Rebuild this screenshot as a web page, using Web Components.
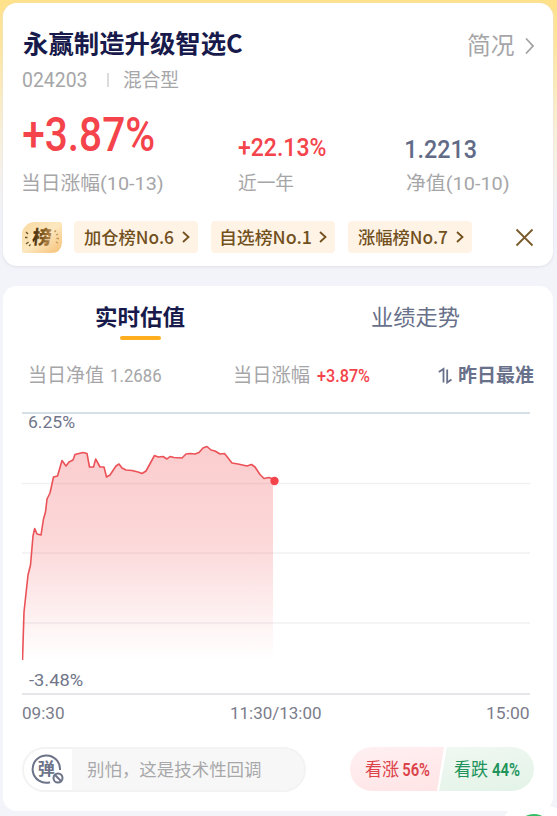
<!DOCTYPE html>
<html lang="zh-CN">
<head>
<meta charset="utf-8">
<title>永赢制造升级智选C</title>
<style>
html,body{
	margin: 0;
	height: 816px;
	overflow: hidden;
}
body{
	font-family: Roboto,"Noto Sans CJK SC",sans-serif;
	color: #a6a6a8;
}
</style>
</head>
<body>
<fund-page></fund-page>
<script>
const define=(name,html,setup)=>{
	const tpl=document.createElement('template');
	tpl.innerHTML=html;
	customElements.define(name,class extends HTMLElement{
		connectedCallback(){
			if(this.shadowRoot)return;
			this.attachShadow({mode:'open'}).appendChild(tpl.content.cloneNode(true));
			if(setup)setup(this,this.shadowRoot);
		}
	});
};

// text condensed or widened so that its ink fills the width given in w
const ctx=document.createElement('canvas').getContext('2d');
define('fit-text',`
<style>
:host{
	display: block;
	flex: none;
	white-space: nowrap;
}
span{
	display: inline-block;
	transform-origin: 0 50%;
}
</style>
<span><slot></slot></span>
`,(el,root)=>{
	const w=+el.getAttribute('w');
	const cs=getComputedStyle(el);
	ctx.font=`${cs.fontWeight} ${cs.fontSize} ${cs.fontFamily}`;
	const m=ctx.measureText(el.textContent);
	const s=w/(m.actualBoundingBoxRight+m.actualBoundingBoxLeft);
	el.style.width=w+'px';
	root.querySelector('span').style.transform=`translateX(${m.actualBoundingBoxLeft*s}px) scaleX(${s})`;
});

define('ui-card',`
<style>
:host{
	display: block;
	box-sizing: border-box;
	background: #fff;
	border-radius: 14px;
}
</style>
<slot></slot>
`);

define('fund-head',`
<style>
:host{
	display: grid;
	grid-template-columns: 1fr auto;
	padding: 0 19px 0 20px;
}
.name{
	font: bold 25.5px/32px "Noto Sans CJK SC",sans-serif;
	color: #171a4b;
	margin-top: -2px;
}
.more{
	display: flex;
	align-items: center;
	gap: 11px;
	font-size: 23.5px;
	line-height: 36px;
	height: 36px;
}
.sub{
	display: flex;
	align-items: center;
	height: 26px;
	font-size: 19px;
	line-height: 26px;
	margin-top: 3px;
}
.sub i{
	width: 2px;
	height: 14px;
	background: #dcdcde;
	margin: 0 14px 0 20px;
}
.code{
	font-size: 20.5px;
}
.type{
	padding-top: 1px;
}
svg{
	display: block;
}
</style>
<fit-text class="name" w="220">永赢制造升级智选C</fit-text>
<div class="more"><fit-text w="46">简况</fit-text>
<svg width="9" height="18" viewBox="0 0 9 18" fill="none" stroke="#a2a2a4" stroke-width="1.8"><path d="M1 1.5 8 9 1 16.5"/></svg></div>
<div class="sub"><fit-text class="code" w="64">024203</fit-text><i></i><fit-text class="type" w="56">混合型</fit-text></div>
`);

define('fund-metrics',`
<style>
:host{
	display: grid;
	grid-template-columns: 215px 168px 1fr;
	padding-left: 20px;
	font-size: 19px;
	line-height: 26px;
}
.v{
	height: 60px;
	line-height: 60px;
	margin-bottom: 6px;
	color: #f4434a;
	font-size: 26.5px;
	font-weight: 500;
	padding-top: 12px;
	box-sizing: border-box;
}
.big{
	font-size: 48px;
	padding-top: 0;
}
.nav{
	color: #616a86;
	padding-top: 14px;
}
</style>
<div><fit-text class="v big" w="131">+3.87%</fit-text><fit-text w="140">当日涨幅(10-13)</fit-text></div>
<div><fit-text class="v" w="88">+22.13%</fit-text><fit-text w="56">近一年</fit-text></div>
<div><fit-text class="v nav" w="70">1.2213</fit-text><fit-text w="103">净值(10-10)</fit-text></div>
`);

define('rank-chip',`
<style>
:host{
	display: flex;
	align-items: center;
	justify-content: space-between;
	box-sizing: border-box;
	width: 124px;
	height: 32px;
	padding: 0 8px 0 10px;
	border-radius: 4px;
	background: #fff3e5;
	color: #72501d;
	font: 500 17.5px/32px "Noto Sans CJK SC",sans-serif;
}
</style>
<slot></slot>
<svg width="8" height="12" viewBox="0 0 8 12" fill="none" stroke="#72501d" stroke-width="1.8"><path d="M1 1 6.5 6 1 11"/></svg>
`);

define('rank-badge',`
<style>
:host{
	display: block;
	width: 40px;
	height: 31px;
}
svg{
	display: block;
}
text{
	font: 900 19px "Noto Sans CJK SC",sans-serif;
}
</style>
<svg width="40" height="31" viewBox="0 0 40 31">
<defs>
<linearGradient id="bg" x1="0" y1="0" x2="1" y2="1"><stop stop-color="#f9d99f"/><stop offset=".5" stop-color="#fce8c0"/><stop offset="1" stop-color="#f5bf73"/></linearGradient>
<linearGradient id="fg"><stop stop-color="#3d2b10"/><stop offset=".35" stop-color="#6b4a1a"/><stop offset="1" stop-color="#b88747"/></linearGradient>
</defs>
<path d="M12 0H38Q40 0 40 2V21Q39 31 29 31H2Q0 31 0 29V11Q2 1 12 0Z" fill="url(#bg)"/>
<text x="12" y="22.500" fill="url(#fg)" transform="skewX(-6)">榜</text>
<g stroke-width="1.3"><path d="M4 10 6 12M3 15.5H5.500M4 22 6.500 20M7 24 8.500 22.500" stroke="#6d5226"/><path d="M34 8.500 32.500 10M36 12 34 13M37 16.500H34.500M36 21 34 20" stroke="#c39659"/></g>
</svg>
`);

define('rank-row',`
<style>
:host{
	display: flex;
	align-items: center;
	padding: 0 19px;
	height: 32px;
	gap: 13px;
}
.x{
	margin-left: auto;
}
rank-badge{
	margin-right: -1px;
}
</style>
<rank-badge></rank-badge>
<rank-chip><fit-text w="90">加仓榜No.6</fit-text></rank-chip>
<rank-chip><fit-text w="90">自选榜No.1</fit-text></rank-chip>
<rank-chip><fit-text w="90">涨幅榜No.7</fit-text></rank-chip>
<svg class="x" width="19" height="19" viewBox="0 0 19 19" fill="none" stroke="#795a2b" stroke-width="1.8"><path d="M1.500 1.500 17.500 17.500M17.500 1.500 1.500 17.500"/></svg>
`);

define('tab-bar',`
<style>
:host{
	display: flex;
	justify-content: space-between;
	padding: 0 93px;
	font-size: 22px;
	line-height: 30px;
	color: #68708a;
}
.on{
	color: #171a4b;
	font-weight: bold;
}
i{
	display: block;
	width: 41px;
	height: 4px;
	margin: 3px auto 0 24px;
	border-radius: 2px;
	background: #ffae1f;
}
</style>
<div><fit-text class="on" w="89">实时估值</fit-text><i></i></div>
<fit-text w="88">业绩走势</fit-text>
`);

define('value-row',`
<style>
:host{
	display: flex;
	padding: 0 19px 0 27px;
	font-size: 19px;
	line-height: 28px;
	height: 28px;
}
.num{
	margin-left: 7px;
}
.up{
	color: #f4434a;
	font-weight: 500;
}
.gap{
	margin-left: 74px;
}
svg{
	margin: 5px 6px 0 auto;
}
.sort{
	color: #68708a;
	font-weight: bold;
}
</style>
<fit-text w="74">当日净值</fit-text><fit-text class="num" w="50">1.2686</fit-text>
<fit-text class="gap" w="75">当日涨幅</fit-text><fit-text class="num up" w="53">+3.87%</fit-text>
<svg width="15" height="18" viewBox="0 0 15 18" fill="none" stroke="#68708a" stroke-width="1.800"><path d="M.8 5 5.500 2V15.500M9.200 2.500V15.500L13.500 12.500"/></svg>
<fit-text class="sort" w="75">昨日最准</fit-text>
`);

const points=[
	[22.5,660],[24,612],[28,575],[30.500,565],[33,536],[34.700,528.500],[37,534],[41,535],[43.500,519],[45.500,512],[47,499],[50,493],[53.500,477],
	[57.500,476],[62,460.500],[66,466],[69,462],[73,460],[75,454.500],[83,452.500],[87,453.500],[89.500,467],[93.500,467],[95.700,459],[100,467],[104,467],[106.500,477],[110,475],
	[116,466],[119,464],[122,468],[126,470],[132,470.500],[138,472],[142,473.500],[146,471],[154.500,455.500],[158,457],[163,456.500],[167,459],[170,456.500],[174,457.500],[182,458],
	[186,454],[190,453.500],[195,454],[199,452.500],[203,448],[207,446.500],[211,450],[215,451],[220,454],[224.500,453.500],[232,463],[238,464],[247,466],[251.500,464.500],[255,467],[260,474.500],[264,478.500],[269,477.500],[273,479]
];
define('trend-chart',`
<style>
:host{
	display: grid;
	margin: 0 23px 0 19px;
	height: 284px;
	color: #707589;
	font-size: 16.500px;
	line-height: 22px;
}
svg{
	display: block;
}
svg,.label{
	grid-area: 1/1;
}
.label{
	margin: 0 0 1px 6.500px;
}
.low{
	align-self: end;
	margin-bottom: 4px;
}
</style>
<svg width="508" height="284" viewBox="22 412 508 284">
<defs><linearGradient id="g" gradientUnits="userSpaceOnUse" x1="0" y1="446" x2="0" y2="660"><stop stop-color="#f04449" stop-opacity=".27"/><stop offset=".45" stop-color="#f04449" stop-opacity=".21"/><stop offset="1" stop-color="#f04449" stop-opacity="0"/></linearGradient></defs>
<path d="M22 413H530" stroke="#d5e0e4" stroke-width="2"/>
<path d="M22 483.500H530M22 553H530M22 623H530" stroke="#f1f1f2" stroke-width="1.500"/>
<path d="M22 694H530" stroke="#e5e6e9" stroke-width="2"/>
<path class="area" fill="url(#g)"/>
<path class="line" fill="none" stroke="#eb5257" stroke-width="1.600" stroke-linejoin="round"/>
<circle cx="274.500" cy="481" r="4.200" fill="#f4434a"/>
</svg>
<fit-text class="label" w="46">6.25%</fit-text>
<fit-text class="label low" w="54">-3.48%</fit-text>
`,(el,root)=>{
	const d='M'+points.map(p=>p.join(' ')).join('L');
	root.querySelector('.line').setAttribute('d',d);
	root.querySelector('.area').setAttribute('d',d+'V660H22Z');
});

define('time-axis',`
<style>
:host{
	display: flex;
	justify-content: space-between;
	margin: 0 24px 0 19px;
	color: #7b7c8b;
	font-size: 17px;
	line-height: 22px;
}
</style>
<fit-text w="42">09:30</fit-text><fit-text w="90">11:30/13:00</fit-text><fit-text w="42">15:00</fit-text>
`);

define('comment-box',`
<style>
:host{
	display: flex;
	align-items: center;
	box-sizing: border-box;
	width: 284px;
	height: 45px;
	border: 2px solid #f3f3f4;
	border-radius: 23px;
	background: #f7f7f7;
	overflow: hidden;
	font-size: 17.500px;
	line-height: 41px;
	color: #a8a8aa;
}
.ic{
	width: 48px;
	height: 41px;
	margin-right: 15px;
	background: #fff;
}
fit-text{
	padding-top: 2px;
}
text{
	font: bold 17px "Noto Sans CJK SC",sans-serif;
}
</style>
<svg class="ic" viewBox="25 749 48 41" fill="none" stroke="#6d7388" stroke-width="2">
<path d="M61 770A13.700 13.700 0 1 0 51 782.300"/>
<text x="38.800" y="774.500" fill="#6d7388" stroke="none">弹</text>
<circle cx="59" cy="778" r="4.500"/><path d="M56 775 62 781"/>
</svg>
<fit-text w="174">别怕，这是技术性回调</fit-text>
`);

define('vote-bar',`
<style>
:host{
	display: flex;
	width: 184px;
	height: 44px;
	font-size: 18px;
	line-height: 46px;
}
div{
	display: flex;
	box-sizing: border-box;
	gap: 4px;
}
.up{
	width: 94px;
	padding-left: 15px;
	color: #dc4249;
	background: linear-gradient(170deg,#fff0f2,#ffe4e5);
	border-radius: 22px 0 0 22px;
	clip-path: polygon(0 0,100% 0,calc(100% - 7px) 100%,0 100%);
}
.down{
	width: 95px;
	margin-left: -5px;
	padding-left: 15px;
	color: #20935a;
	background: linear-gradient(170deg,#f0f8f2,#e3f3e7);
	border-radius: 0 22px 22px 0;
	clip-path: polygon(8px 0,100% 0,100% 100%,0 100%);
}
b{
	font-weight: 600;
	font-size: 19px;
}
</style>
<div class="up"><fit-text w="34">看涨</fit-text><b><fit-text w="27">56%</fit-text></b></div>
<div class="down"><fit-text w="34">看跌</fit-text><b><fit-text w="28">44%</fit-text></b></div>
`);

define('fund-page',`
<style>
:host{
	display: flex;
	flex-direction: column;
	gap: 20px;
	position: relative;
	box-sizing: border-box;
	width: 557px;
	height: 816px;
	padding: 3px 4px 0 3px;
	overflow: hidden;
	background: linear-gradient(#ffe18a,#ffe596 40px,#faf0d7 130px,#f3f4fa 210px);
}
ui-card{
	flex: none;
}
.info{
	height: 263px;
	padding-top: 25px;
	box-shadow: 0 1px 3px #dfe0e8;
}
.chart{
	height: 525px;
	padding-top: 17px;
}
fund-metrics{
	margin-top: 12px;
}
rank-row{
	margin-top: 24px;
}
value-row{
	margin-top: 22px;
}
trend-chart{
	margin-top: 22px;
}
time-axis{
	margin-top: 6px;
}
.foot{
	display: flex;
	justify-content: space-between;
	margin: 23px 19px 0;
}
.bubble{
	position: absolute;
	left: 503px;
	top: 806px;
	width: 62px;
	height: 62px;
	border-radius: 18px;
	background: #fff;
}
.bubble i{
	display: block;
	width: 34px;
	height: 34px;
	margin: 8px 0 0 14px;
	border-radius: 50%;
	background: #35be68;
}
</style>
<ui-card class="info">
	<fund-head></fund-head>
	<fund-metrics></fund-metrics>
	<rank-row></rank-row>
</ui-card>
<ui-card class="chart">
	<tab-bar></tab-bar>
	<value-row></value-row>
	<trend-chart></trend-chart>
	<time-axis></time-axis>
	<div class="foot"><comment-box></comment-box><vote-bar></vote-bar></div>
</ui-card>
<div class="bubble"><i></i></div>
`);
</script>
</body>
</html>
